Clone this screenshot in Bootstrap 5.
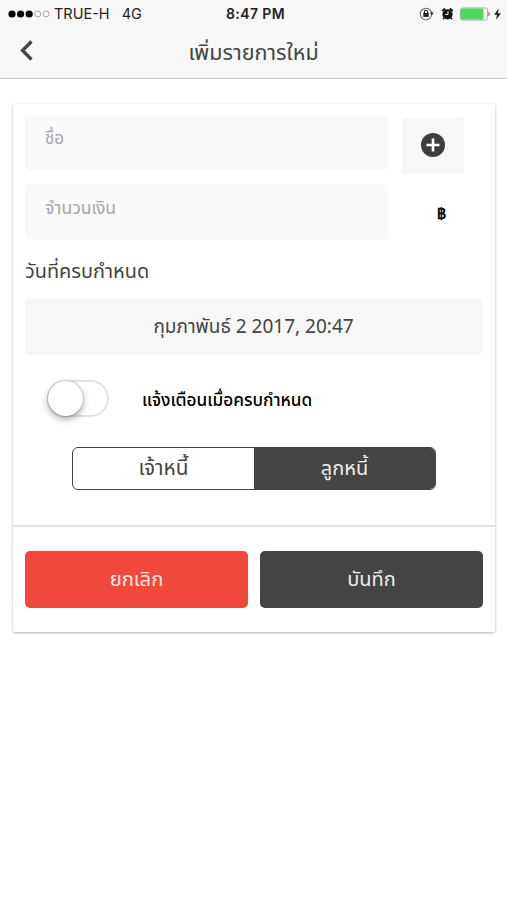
<!DOCTYPE html>
<html lang="th">
<head>
<meta charset="utf-8">
<meta name="viewport" content="width=device-width, initial-scale=1">
<title>เพิ่มรายการใหม่</title>
<link href="https://cdn.jsdelivr.net/npm/bootstrap@5.3.0/dist/css/bootstrap.min.css" rel="stylesheet">
<style>
  body { font-family: "Noto Sans Thai", "Noto Sans", sans-serif; color: #444; font-size: 18px; background: #fff; min-height: 100vh; }
  .top-area { height: 79px; background: #f7f7f7; border-bottom: 1px solid #ccc; }
  .status-row { height: 27px; padding: 0 5px 0 8px; font: 14.5px/27px Inter, sans-serif; color: #222; display: grid; grid-template-columns: 1fr auto 1fr; }
  .clock { font-weight: 600; font-size: 14px; padding-left: 1px; letter-spacing: .4px; }
  .carrier { margin-left: 3px; }
  .title-row { height: 50px; display: grid; grid-template-columns: 54px 1fr 54px; }
  .label-text { white-space: nowrap; display: inline-block; line-height: 1.2; }
  .entry-panel { margin: 25px 12px 0 13px; height: 528px; box-shadow: 0 1px 3px rgba(0,0,0,.3); border-radius: 2px; background: #fff; }
  .panel-body { height: 423px; padding: 12px 13px 0 12px; border-bottom: 2px solid #e2e2e2; }
  .fields { gap: 14px; }
  .field-row { height: 54px; }
  .entry-input { width: 363px; height: 54px; border: 0; border-radius: 4px; background: #fafafa; padding: 0 20px 8px; font-size: 17px; color: #444; }
  .entry-input::placeholder { color: #a6a6a6; opacity: 1; }
  .amount { height: 55px; padding-bottom: 7px; font-size: 17.5px; }
  .add-btn { width: 62px; height: 56px; margin: 2px 0 0 14px; padding: 0 0 3px; border-radius: 3px; background: #f7f7f7; }
  .unit { width: 62px; margin: 4px 0 0 22px; color: #111; font: bold 15px "Liberation Sans", sans-serif; }
  .due-row { height: 59px; padding-top: 9px; }
  .date-box { height: 57px; padding-top: 3px; background: #f7f7f7; border-radius: 5px; }
  .toggle { appearance: none; width: 62px; height: 37px; border: 2px solid #e4e4e4; border-radius: 19px; margin: 0 0 0 22px; background: #fff; display: flex; align-items: center; }
  .toggle::before { content: ""; width: 35px; height: 35px; margin-left: -1px; border-radius: 50%; background: #fff; box-shadow: 0 3px 7px rgba(0,0,0,.35), 0 0 2px rgba(0,0,0,.3); }
  .remind-row { margin-top: 25px; }
  .kind { width: 364px; height: 43px; margin: 30px 0 0 47px; border: 1px solid #444; border-radius: 6px; overflow: hidden; }
  .kind .btn, .actions .btn { border-radius: 0; border: 0; font-size: 20px; padding: 0; }
  .actions { padding: 24px 12px 0 12px; gap: 12px; }
  .actions .btn { height: 57px; border-radius: 5px; }
  .charcoal, .charcoal:hover { background: #444; color: #eee; }
  .tomato, .tomato:hover { background: #f0483b; color: #fce9e7; }
  .t-title { font-size: 21.5px; padding-top: 3px; }
  .t-due { font-size: 19.9px; }
  .t-date { font-size: 19px; }
  .t-remind { font-size: 17.2px; font-weight: 500; padding: 6px 0 0 9px; }
  .t-a { font-size: 20.8px; color: #444; }
  .t-c { font-size: 20.3px; }
</style>
<script src="https://cdn.jsdelivr.net/npm/bootstrap@5.3.0/dist/js/bootstrap.bundle.min.js"></script>
</head>
<body>
<header class="top-area">
  <div class="status-row">
    <div class="d-flex align-items-center">
      <svg width="43" height="10" viewBox="0 0 43 10"><g fill="#000"><circle cx="4" cy="5" r="3.6"/><circle cx="12.6" cy="5" r="3.6"/><circle cx="21.2" cy="5" r="3.6"/></g><g fill="none" stroke="#aaa"><circle cx="29.7" cy="5" r="3"/><circle cx="38" cy="5" r="3"/></g></svg>
      <span class="carrier me-2 text-nowrap">TRUE-H</span><span class="ms-1">4G</span>
    </div>
    <span class="clock">8:47 PM</span>
    <div class="d-flex align-items-center justify-content-end">
      <svg width="84" height="16" viewBox="0 0 84 16">
        <circle cx="8" cy="8" r="5.700" fill="none" stroke="#666" stroke-width="1.100"/>
        <path d="M11.800 6.600h4l-2 3z" fill="#333"/><rect x="5.300" y="7" width="5.400" height="3.900" fill="#222"/><path d="M6.400 7V5.900a1.600 1.600 0 0 1 3.200 0V7" fill="none" stroke="#222" stroke-width="1.100"/>
        <circle cx="29.500" cy="8.300" r="5.100" fill="#111"/><path d="M24.200 5l3-2.500M34.800 5l-3-2.500M26 12l-1 1.200M33 12l1 1.200" stroke="#111" stroke-width="1.800"/><path d="M30 5.200V8.500H27.300" fill="none" stroke="#fff"/>
        <rect x="42.500" y="2" width="27" height="12" rx="2" fill="#fff" stroke="#aaa"/><rect x="43" y="2.500" width="22.500" height="11" rx="1.200" fill="#4cd964"/><path d="M70.500 5.500q2.500 2.500 0 5z" fill="#555"/>
        <path d="M80.800 2.500L76 8.700h3l-1 5L83 7.200h-3.100z" fill="#222"/>
      </svg>
    </div>
  </div>
  <div class="title-row align-items-center text-center">
    <svg width="54" height="30" viewBox="0 0 54 30"><path d="M31.500 4.500L22.500 13.500L31.500 22.500" fill="none" stroke="#444" stroke-width="3.200"/></svg>
    <h1 class="m-0 fs-5 fw-normal"><span class="label-text t-title">เพิ่มรายการใหม่</span></h1>
  </div>
</header>
<main class="entry-panel">
  <div class="panel-body">
    <div class="d-flex flex-column fields">
      <div class="field-row d-flex"><input class="entry-input" placeholder="ชื่อ" aria-label="ชื่อ"><button class="btn add-btn d-flex align-items-center justify-content-center" aria-label="เพิ่ม"><svg width="24" height="24"><circle cx="12" cy="12" r="12" fill="#3d3d3d"/><path d="M12 5.500v13M5.500 12h13" stroke="#fff" stroke-width="2.600"/></svg></button></div>
      <div class="d-flex align-items-center"><input class="entry-input amount" placeholder="จำนวนเงิน" aria-label="จำนวนเงิน"><span class="unit text-center">฿</span></div>
    </div>
    <div class="due-row d-flex align-items-center"><span class="label-text t-due">วันที่ครบกำหนด</span></div>
    <div class="date-box d-flex align-items-center justify-content-center"><span class="label-text t-date">กุมภาพันธ์ 2 2017, 20:47</span></div>
    <div class="remind-row d-flex align-items-center"><input class="toggle" type="checkbox" role="switch" id="remind"><label for="remind" class="label-text t-remind text-black ms-4">แจ้งเตือนเมื่อครบกำหนด</label></div>
    <div class="kind d-flex"><button class="btn w-50"><span class="label-text t-a">เจ้าหนี้</span></button><button class="btn w-50 charcoal"><span class="label-text">ลูกหนี้</span></button></div>
  </div>
  <div class="actions d-flex"><button class="btn w-50 tomato"><span class="label-text t-c">ยกเลิก</span></button><button class="btn w-50 charcoal"><span class="label-text">บันทึก</span></button></div>
</main>
</body>
</html>
